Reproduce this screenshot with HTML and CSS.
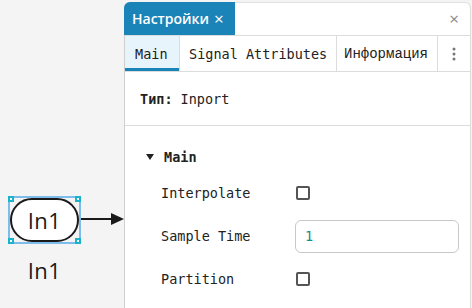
FILE: index.html
```html
<!DOCTYPE html>
<html>
<head>
<meta charset="utf-8">
<link rel="stylesheet" href="styles.css">
</head>
<body>
<div class="app">
  <div class="canvas">
    <div class="block">
      <div class="pill">In1</div>
      <span class="handle tl"></span><span class="handle tr"></span>
      <span class="handle bl"></span><span class="handle br"></span>
    </div>
    <svg class="arrow" width="44" height="14" viewBox="0 0 44 14">
      <line x1="0" y1="7" x2="32" y2="7" stroke="#1a1a1a" stroke-width="2"/>
      <polygon points="30,1 43,7 30,13" fill="#1a1a1a"/>
    </svg>
    <div class="block-label">In1</div>
  </div>
  <div class="panel">
    <div class="header">
      <div class="htab">Настройки <span class="hx">×</span></div>
      <div class="hclose">×</div>
    </div>
    <div class="tabs">
      <div class="tab active">Main</div>
      <div class="tab">Signal Attributes</div>
      <div class="tab">Информация</div>
      <div class="tab more">
        <svg width="4" height="14" viewBox="0 0 4 14"><circle cx="2" cy="2" r="1.5" fill="#777"/><circle cx="2" cy="7" r="1.5" fill="#777"/><circle cx="2" cy="12" r="1.5" fill="#777"/></svg>
      </div>
    </div>
    <div class="type"><b>Тип:</b> Inport</div>
    <div class="section">
      <div class="sec-title"><span class="tri"></span>Main</div>
      <div class="row"><span class="lbl">Interpolate</span><span class="cb"></span></div>
      <div class="row"><span class="lbl">Sample Time</span><div class="input">1</div></div>
      <div class="row"><span class="lbl">Partition</span><span class="cb"></span></div>
    </div>
  </div>
</div>
</body>
</html>
```
FILE: styles.css
```css
* { box-sizing: border-box; }
html, body { margin: 0; padding: 0; }
body {
  width: 472px; height: 308px; overflow: hidden;
  background: #f4f4f4;
  font-family: "DejaVu Sans Mono", monospace;
  color: #222;
}
.app { display: flex; height: 308px; }
.canvas { width: 124px; flex: none; position: relative; }
.block {
  position: absolute; left: 8px; top: 196px; width: 73px; height: 48px;
  border: 2px solid #7cbdea;
}
.pill {
  position: absolute; left: 0; top: 0; right: 0; bottom: 0;
  background: #fff; border: 2px solid #1a1a1a; border-radius: 22px / 22px;
  display: flex; align-items: center; justify-content: center;
  font-family: "Open Sans", sans-serif; font-size: 22px; color: #1a1a1a;
  padding-bottom: 1px; letter-spacing: 0.5px;
}
.handle {
  position: absolute; width: 6px; height: 6px; background: #fff;
  border: 2px solid #19b3cc;
}
.handle.tl { left: -2px; top: -2px; }
.handle.tr { right: -2px; top: -2px; }
.handle.bl { left: -2px; bottom: -2px; }
.handle.br { right: -2px; bottom: -2px; }
.arrow { position: absolute; left: 81px; top: 212px; }
.block-label {
  position: absolute; left: 0; width: 89px; top: 255px; text-align: center;
  font-family: "Open Sans", sans-serif; font-size: 22px; color: #1a1a1a; letter-spacing: 0.5px;
}
.panel {
  flex: 1; margin-top: 2px; background: #fff;
  border-left: 1px solid #cfcfcf; border-right: 1px solid #dcdcdc; border-top: 1px solid #e0e0e0;
  border-top-left-radius: 6px; border-top-right-radius: 6px;
  margin-right: 1px;
}
.header { display: flex; height: 33px; align-items: stretch; margin-top: -1px; }
.htab {
  background: #1a84b8; color: #fff; width: 111px;
  font-family: "Open Sans", sans-serif; font-weight: 600; font-size: 14px;
  display: flex; align-items: center; padding-left: 8px; border-top-left-radius: 6px;
  margin-left: -1px;
}
.hx { font-weight: 400; font-size: 17px; margin-left: 5px; line-height: 1; }
.hclose {
  margin-left: auto; width: 32px; display: flex; align-items: center; justify-content: center;
  color: #888; font-family: "Open Sans", sans-serif; font-size: 17px;
}
.tabs { display: flex; height: 37px; border-top: 1px solid #dcdcdc; border-bottom: 1px solid #dcdcdc; }
.tab {
  display: flex; align-items: center; padding: 0 8px; font-size: 13.5px; color: #222;
  border-right: 1px solid #dcdcdc;
}
.tab.active { background: #e8f4fc; box-shadow: inset 0 -3px 0 #1a84b8; width: 55px; padding-left: 10px; }
.tab:nth-child(2) { width: 157px; padding-left: 9px; }
.tab:nth-child(3) { width: 101px; font-family: "Liberation Mono", monospace; font-size: 14px; padding-left: 7px; }
.tab.more { border-right: none; flex: 1; justify-content: center; }
.type {
  height: 54px; border-bottom: 1px solid #dcdcdc; display: flex; align-items: center;
  padding-left: 15px; font-size: 13.5px; padding-top: 1px;
}
.type b { margin-right: 8px; font-weight: 700; }
.section { padding: 22px 0 0 19px; }
.sec-title { display: flex; align-items: center; font-weight: 700; font-size: 13.5px; height: 18px; }
.tri {
  width: 0; height: 0; border-left: 4px solid transparent; border-right: 4px solid transparent;
  border-top: 6px solid #222; margin-right: 10px; margin-left: 2px;
}
.row { display: flex; align-items: center; padding-left: 17px; font-size: 13.5px; }
.row:nth-child(2) { margin-top: 8px; height: 38px; }
.row:nth-child(3) { height: 48px; }
.row:nth-child(4) { height: 38px; }
.lbl { width: 135px; }
.cb { width: 14px; height: 14px; border: 2px solid #555; border-radius: 2px; }
.input {
  width: 164px; height: 33px; border: 1px solid #c8c8c8; border-radius: 6px;
  display: flex; align-items: center; padding-left: 9px; color: #10918c; margin-left: -1px;
}
```
